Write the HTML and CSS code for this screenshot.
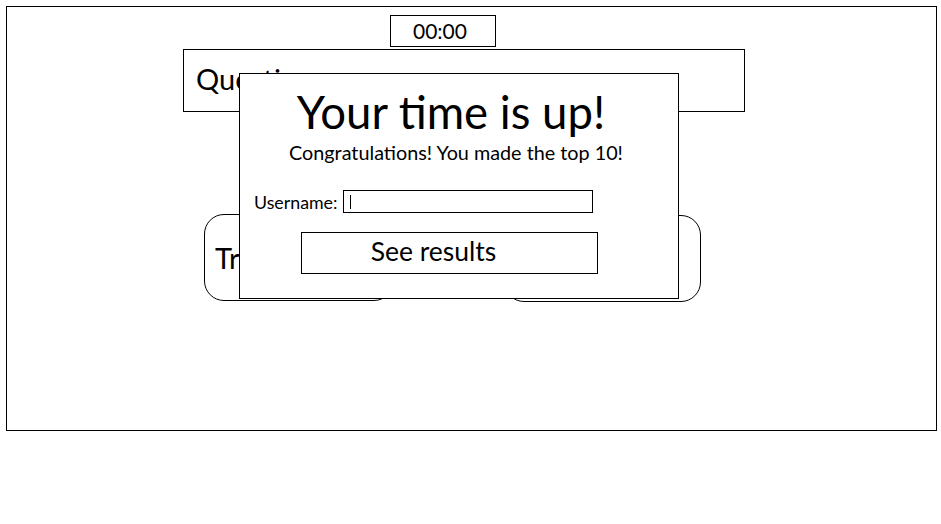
FILE: index.html
```html
<!DOCTYPE html>
<html lang="en">
<head>
<meta charset="utf-8">
<title>Quiz</title>
<link rel="stylesheet" href="styles.css">
</head>
<body>
<div class="frame">
  <div class="timer">00:00</div>
  <div class="question">Question</div>
  <div class="answers">
    <div class="answer answer-left">True</div>
    <div class="answer answer-right">False</div>
  </div>
  <div class="modal">
    <h1 class="modal-title">Your time is up!</h1>
    <p class="modal-sub">Congratulations! You made the top 10!</p>
    <div class="user-row">
      <label class="user-label" for="username">Username:</label>
      <span class="input-wrap">
        <input class="user-input" id="username" type="text">
        <span class="caret"></span>
      </span>
    </div>
    <button class="results-btn" type="button">See results</button>
  </div>
</div>
</body>
</html>
```
FILE: styles.css
```css
* { box-sizing: border-box; }

body {
  margin: 0;
  background: #fff;
  font-family: Lato, "Open Sans", sans-serif;
  color: #000;
}

.frame {
  position: relative;
  margin: 6px 0 0 6px;
  width: 931px;
  height: 425px;
  border: 1px solid #000;
  padding-top: 8px;
}

.timer {
  margin-left: 383px;
  width: 106px;
  height: 32px;
  border: 1px solid #000;
  padding-right: 6px;
  font-size: 21px;
  line-height: 30px;
  text-align: center;
}

.question {
  margin-top: 2px;
  margin-left: 176px;
  width: 562px;
  height: 63px;
  border: 1px solid #000;
  padding-left: 12px;
  font-size: 29px;
  line-height: 58px;
}

.answers {
  display: flex;
  align-items: flex-start;
  margin-top: 102px;
  margin-left: 197px;
  gap: 110px;
}

.answer {
  height: 87px;
  border: 1px solid #000;
  border-radius: 20px;
  padding-left: 10px;
  font-size: 29px;
  line-height: 86px;
}

.answer-left { width: 190px; }
.answer-right { width: 197px; margin-top: 1px; }

.modal {
  position: absolute;
  left: 232px;
  top: 66px;
  width: 440px;
  height: 226px;
  border: 1px solid #000;
  background: #fff;
}

.modal-title {
  margin: 9px 0 0;
  padding-right: 16px;
  font-size: 45.5px;
  font-weight: 400;
  line-height: 57px;
  text-align: center;
}

.modal-sub {
  margin: 0;
  padding-right: 6px;
  font-size: 19.8px;
  line-height: 24px;
  text-align: center;
}

.user-row {
  display: flex;
  align-items: center;
  margin-top: 26px;
  padding-left: 14px;
  gap: 6px;
}

.user-label {
  font-size: 17.8px;
}

.input-wrap {
  position: relative;
  display: block;
}

.user-input {
  display: block;
  width: 250px;
  height: 23px;
  border: 1px solid #000;
  border-radius: 0;
  padding: 0 4px;
  font: inherit;
  font-size: 14px;
  outline: none;
  background: #fff;
}

.caret {
  position: absolute;
  left: 7px;
  top: 5px;
  width: 1px;
  height: 14px;
  background: #000;
}

.results-btn {
  display: block;
  margin: 19px 0 0 61px;
  width: 297px;
  height: 42px;
  border: 1px solid #000;
  border-radius: 0;
  background: #fff;
  padding: 0 32px 4px 0;
  font-family: inherit;
  font-size: 26.5px;
  line-height: 34px;
  color: #000;
  text-align: center;
}
```
